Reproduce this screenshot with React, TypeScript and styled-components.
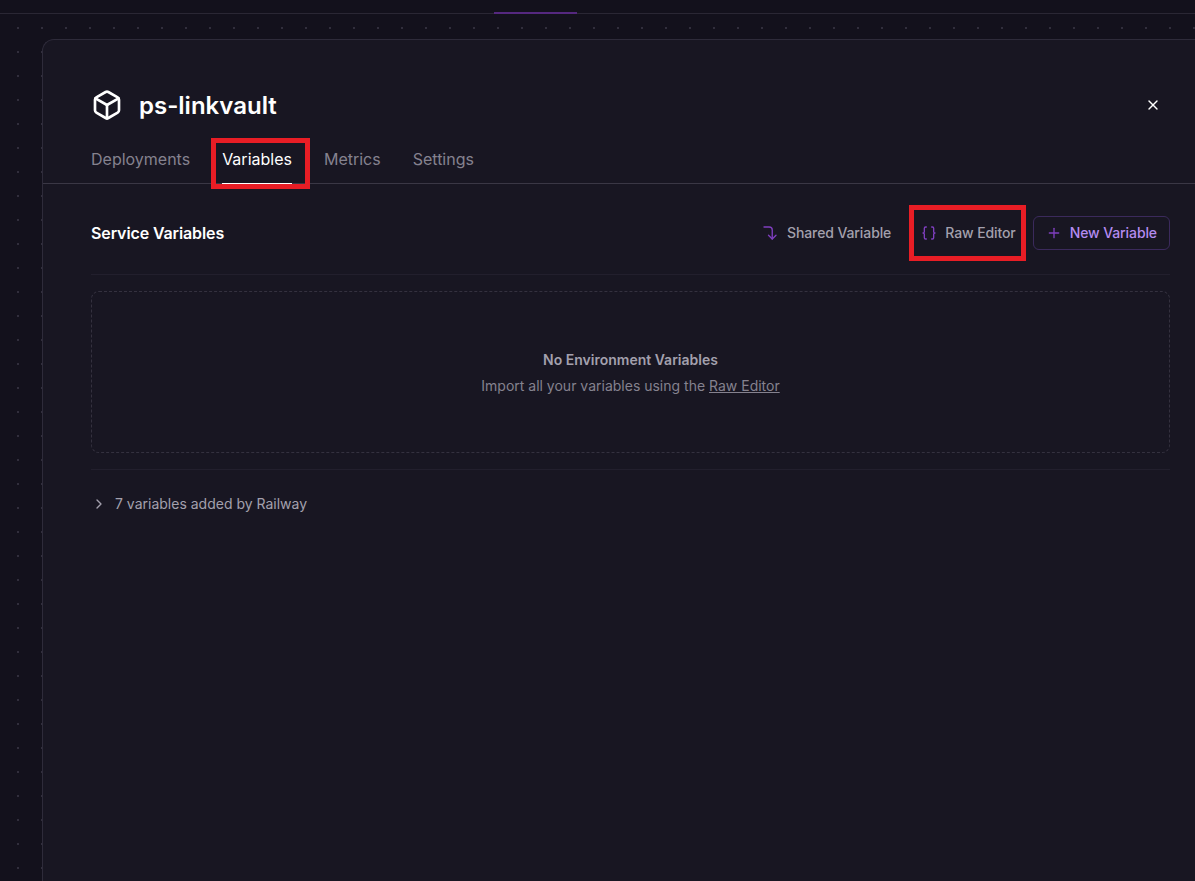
import { createGlobalStyle } from "styled-components";
import styled from "styled-components";
import { Box, Braces, ChevronRight, CornerRightDown, Plus, X } from "lucide-react";

const GlobalStyle = createGlobalStyle`
  html, body {
    margin: 0;
    height: 100%;
    overflow: hidden;
    background: #13111c;
    font-family: Inter, "Liberation Sans", sans-serif;
  }
`;

const Page = styled.div`
  width: 1195px;
  height: 881px;
  overflow: hidden;
  background-color: #13111c;
  background-image: radial-gradient(circle at 1px 1px, #312e3c 0.8px, transparent 1.1px);
  background-size: 24px 24px;
  background-position: 17px 27px;
`;

const TopBar = styled.div`
  position: relative;
  height: 13px;
  background: #13111c;
  border-bottom: 1px solid #2a2734;
`;

const ActiveMark = styled.div`
  position: absolute;
  left: 494px;
  bottom: -1px;
  width: 83px;
  height: 2px;
  background: #55287f;
`;

const Panel = styled.div`
  margin: 25px 0 0 42px;
  height: 900px;
  background: #181622;
  border: 1px solid #2e2b3a;
  border-right: none;
  border-bottom: none;
  border-top-left-radius: 12px;
`;

const Header = styled.header`
  display: flex;
  align-items: center;
  height: 32px;
  padding: 49px 34px 0 48px;
`;

const Title = styled.h1`
  flex: 1;
  margin: 0 0 0 16px;
  padding-top: 1px;
  font-size: 24px;
  line-height: 32px;
  font-weight: 600;
  color: #ffffff;
`;

const Close = styled.button`
  display: flex;
  padding: 0;
  border: none;
  background: none;
  color: #ffffff;
`;

const Tabs = styled.nav`
  display: flex;
  gap: 32px;
  height: 48px;
  margin-top: 14px;
  padding-left: 48px;
  border-bottom: 1px solid #3a3745;
`;

const Tab = styled.a<{ $active?: boolean }>`
  position: relative;
  height: 49px;
  box-sizing: border-box;
  padding-top: 12px;
  font-size: 16px;
  line-height: 24px;
  color: ${({ $active }) => ($active ? "#ffffff" : "#85828f")};
  border-bottom: 1px solid ${({ $active }) => ($active ? "#ffffff" : "transparent")};
`;

const Highlight = styled.span<{ $top: number; $right: number; $bottom: number; $left: number }>`
  position: absolute;
  top: ${({ $top }) => $top}px;
  right: ${({ $right }) => $right}px;
  bottom: ${({ $bottom }) => $bottom}px;
  left: ${({ $left }) => $left}px;
  border: 5px solid #e81d25;
  pointer-events: none;
`;

const Content = styled.main`
  padding: 0 25px 0 48px;
`;

const SectionHeader = styled.div`
  display: flex;
  align-items: center;
  padding: 32px 0 24px;
  border-bottom: 1px solid #221f2d;
`;

const SectionTitle = styled.h2`
  flex: 1;
  margin: 0;
  font-size: 16px;
  line-height: 24px;
  font-weight: 600;
  letter-spacing: -0.12px;
  color: #ffffff;
`;

const Action = styled.button<{ $outlined?: boolean }>`
  position: relative;
  display: flex;
  align-items: center;
  gap: 8px;
  height: 34px;
  box-sizing: border-box;
  padding: 0 12px 1px;
  font-family: inherit;
  font-size: 14px;
  font-weight: 500;
  letter-spacing: -0.1px;
  background: none;
  border-radius: 6px;
  border: 1px solid ${({ $outlined }) => ($outlined ? "#3b2a5c" : "transparent")};
  color: ${({ $outlined }) => ($outlined ? "#b48bf0" : "#a3a0ad")};
  svg {
    color: #7f3fbf;
  }
`;

const Actions = styled.div`
  display: flex;
  align-items: center;
  gap: 4px;
`;

const EmptyState = styled.div`
  display: flex;
  flex-direction: column;
  align-items: center;
  justify-content: center;
  gap: 6px;
  height: 162px;
  box-sizing: border-box;
  margin-top: 16px;
  padding-top: 2px;
  border: 1px dashed #34313f;
  border-radius: 8px;
`;

const EmptyTitle = styled.div`
  font-size: 14px;
  line-height: 20px;
  font-weight: 600;
  color: #a3a0ad;
`;

const EmptyText = styled.div`
  font-size: 14px;
  line-height: 20px;
  color: #85828f;
  a {
    color: inherit;
    text-decoration: underline;
  }
`;

const Divider = styled.hr`
  margin: 16px 0 0;
  border: none;
  border-top: 1px solid #221f2d;
`;

const Collapsed = styled.div`
  display: flex;
  align-items: center;
  gap: 8px;
  height: 20px;
  margin-top: 24px;
  font-size: 14px;
  line-height: 20px;
  color: #a3a0ad;
`;

const App = () => {
  return (
    <Page>
      <GlobalStyle />
      <TopBar>
        <ActiveMark />
      </TopBar>
      <Panel>
        <Header>
          <Box size={32} strokeWidth={2} color="#ffffff" />
          <Title>ps-linkvault</Title>
          <Close>
            <X size={16} strokeWidth={2} />
          </Close>
        </Header>
        <Tabs>
          <Tab>Deployments</Tab>
          <Tab $active>
            Variables
            <Highlight $top={3} $right={-18} $bottom={-6} $left={-11} />
          </Tab>
          <Tab>Metrics</Tab>
          <Tab>Settings</Tab>
        </Tabs>
        <Content>
          <SectionHeader>
            <SectionTitle>Service Variables</SectionTitle>
            <Actions>
              <Action>
                <CornerRightDown size={18} strokeWidth={1.8} />
                Shared Variable
              </Action>
              <Action>
                <Braces size={16} strokeWidth={2} />
                Raw Editor
                <Highlight $top={-12} $right={2} $bottom={-12} $left={0} />
              </Action>
              <Action $outlined>
                <Plus size={16} strokeWidth={2} />
                New Variable
              </Action>
            </Actions>
          </SectionHeader>
          <EmptyState>
            <EmptyTitle>No Environment Variables</EmptyTitle>
            <EmptyText>
              Import all your variables using the <a>Raw Editor</a>
            </EmptyText>
          </EmptyState>
          <Divider />
          <Collapsed>
            <ChevronRight size={16} strokeWidth={2} />7 variables added by Railway
          </Collapsed>
        </Content>
      </Panel>
    </Page>
  );
};

export default App;
